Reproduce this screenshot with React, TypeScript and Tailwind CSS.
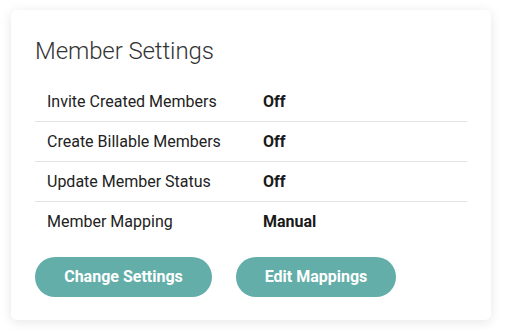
import React from "react";

const rows = [
  ["Invite Created Members", "Off"],
  ["Create Billable Members", "Off"],
  ["Update Member Status", "Off"],
  ["Member Mapping", "Manual"],
];

export default function App() {
  return (
    <div className="w-[505px] h-[333px] bg-white pt-[10px] pl-[11px]" style={{ fontFamily: "Roboto, 'Liberation Sans', sans-serif" }}>
      <div className="w-[480px] h-[310px] bg-white rounded-[6px] shadow-[0_2px_12px_rgba(0,0,0,0.10)] px-[24px] pt-[26px]">
        <h2 className="text-[24px] font-light text-[#333] leading-[30px] tracking-[-0.1px]">Member Settings</h2>
        <div className="mt-[16px] w-[432px]">
          {rows.map(([label, value], i) => (
            <div
              key={label}
              className={`grid grid-cols-[228px_1fr] items-center h-[40px] text-[16px] ${i < rows.length - 1 ? "border-b border-[#e2e2e2]" : ""}`}
            >
              <span className="pl-[12px] text-[#222]">{label}</span>
              <span className="font-bold text-[#1a1a1a]">{value}</span>
            </div>
          ))}
        </div>
        <div className="flex gap-[24px] mt-[15px]">
          <button className="w-[177px] h-[40px] rounded-full bg-[#63aea8] text-white font-bold text-[16px]">Change Settings</button>
          <button className="w-[160px] h-[40px] rounded-full bg-[#63aea8] text-white font-bold text-[16px]">Edit Mappings</button>
        </div>
      </div>
    </div>
  );
}
